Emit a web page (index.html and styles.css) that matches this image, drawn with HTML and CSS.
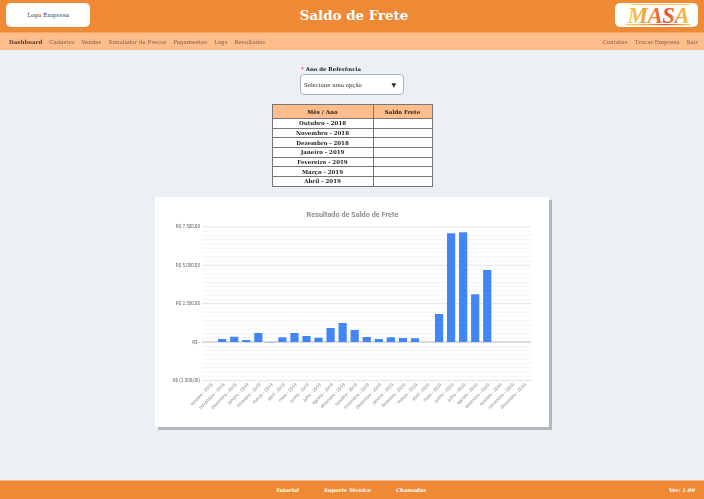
FILE: index.html
```html
<!DOCTYPE html>
<html lang="pt-BR">
<head>
    <meta charset="UTF-8">
    <meta name="viewport" content="width=device-width, initial-scale=1.0">
    <title>Saldo de Frete</title>
    <link rel="stylesheet" href="styles.css">
</head>
<body>
    <div class="page">
        <header class="top-bar">
            <div class="logo-box">Logo Empresa</div>
            <h1 class="page-title">Saldo de Frete</h1>
            <div class="logo-box logo-masa">
                <svg class="masa-svg" width="80" height="22" viewBox="-3 0 80 22">
                    <defs>
                        <linearGradient id="masaFill" x1="0" y1="0" x2="1" y2="0">
                            <stop offset="0" stop-color="#f7d24f"/>
                            <stop offset="0.35" stop-color="#ee9a3c"/>
                            <stop offset="0.62" stop-color="#dd4a2c"/>
                            <stop offset="1" stop-color="#f6d64e"/>
                        </linearGradient>
                    </defs>
                    <rect x="10.5" y="0" width="60" height="1" fill="#f3d65c"/>
                    <rect x="5.5" y="20" width="65" height="1.2" fill="url(#masaFill)"/>
                    <text class="masa-text" x="38.5" y="18.7" text-anchor="middle" fill="url(#masaFill)">MASA</text>
                </svg>
            </div>
        </header>

        <nav class="nav-bar">
            <div class="nav-group">
                <a class="nav-link active">Dashboard</a>
                <a class="nav-link">Cadastro</a>
                <a class="nav-link">Vendas</a>
                <a class="nav-link">Simulador de Preços</a>
                <a class="nav-link">Pagamentos</a>
                <a class="nav-link">Logs</a>
                <a class="nav-link">Resultados</a>
            </div>
            <div class="nav-group">
                <a class="nav-link">Contatos</a>
                <a class="nav-link">Trocar Empresa</a>
                <a class="nav-link">Sair</a>
            </div>
        </nav>

        <main class="content">
            <div class="field">
                <label class="field-label"><span class="required">*</span> Ano de Referência</label>
                <div class="select-box">
                    <span>Selecione uma opção</span>
                    <span class="select-arrow">▼</span>
                </div>
            </div>

            <table class="freight-table">
                <thead>
                    <tr><th class="col-month">Mês / Ano</th><th>Saldo Frete</th></tr>
                </thead>
                <tbody>
                    <tr><td>Outubro - 2018</td><td></td></tr>
                    <tr><td>Novembro - 2018</td><td></td></tr>
                    <tr><td>Dezembro - 2018</td><td></td></tr>
                    <tr><td>Janeiro - 2019</td><td></td></tr>
                    <tr><td>Fevereiro - 2019</td><td></td></tr>
                    <tr><td>Março - 2019</td><td></td></tr>
                    <tr><td>Abril - 2019</td><td></td></tr>
                </tbody>
            </table>

            <section class="chart-card">
                <svg id="chart" class="chart" width="394" height="230" viewBox="155 197 394 230"></svg>
            </section>
        </main>

        <footer class="bottom-bar">
            <div class="footer-links">
                <a>Tutorial</a>
                <a>Suporte Técnico</a>
                <a>Chamados</a>
            </div>
            <span>Ver: 1.00</span>
        </footer>
    </div>

    <script src="chart.js"></script>
</body>
</html>
```
FILE: styles.css
```css
* {
    margin: 0;
    padding: 0;
    box-sizing: border-box;
}

body {
    font-family: 'DejaVu Serif', 'Liberation Serif', serif;
    background-color: #ebf0f5;
    color: #222;
    overflow: hidden;
}

/* the reference is a scaled down capture, so everything is a bit soft */
.page {
    width: 100vw;
    height: 100vh;
    display: flex;
    flex-direction: column;
    filter: blur(0.3px);
}

.top-bar {
    height: 32px;
    flex: none;
    background: #ee8936;
    display: flex;
    justify-content: space-between;
    align-items: center;
    padding: 0 6px 2px;
}

.logo-box {
    width: 84px;
    height: 24px;
    background: #fff;
    border-radius: 5px;
    display: flex;
    justify-content: center;
    align-items: center;
    font-size: 5.7px;
    color: #333;
}

.logo-masa {
    width: 83px;
}

.masa-svg {
    overflow: visible;
}

.masa-text {
    font-family: 'Liberation Serif', serif;
    font-size: 23px;
    font-weight: 700;
    font-style: italic;
    letter-spacing: -0.5px;
}

.page-title {
    font-size: 13.4px;
    font-weight: 700;
    color: #fff;
    padding-left: 3px;
}

.nav-bar {
    height: 18px;
    flex: none;
    background: #ffbd8b;
    border-top: 1px solid #f5a566;
    display: flex;
    justify-content: space-between;
    align-items: center;
    padding: 0 6px 0 9px;
}

.nav-group {
    display: flex;
    gap: 7px;
}

.nav-link {
    font-size: 5.5px;
    color: #7a5a48;
}

.nav-link.active {
    font-weight: 700;
    color: #5a3d2e;
}

.content {
    flex: 1;
    display: flex;
    flex-direction: column;
    align-items: center;
    padding-top: 15px;
}

.field {
    width: 104px;
    margin-bottom: 9px;
}

.field-label {
    display: block;
    font-size: 5.4px;
    font-weight: 700;
    margin: 0 0 1px 1px;
    line-height: 8px;
}

.required {
    color: #e0302a;
}

.select-box {
    height: 21px;
    background: #fff;
    border: 1px solid #a9b3c4;
    border-radius: 4px;
    display: flex;
    justify-content: space-between;
    align-items: center;
    padding: 0 4px 0 3px;
    font-size: 5.4px;
}

.select-arrow {
    font-size: 6px;
    padding-right: 3px;
}

.freight-table {
    width: 161px;
    border-collapse: collapse;
    font-size: 5.5px;
    table-layout: fixed;
    margin-bottom: 10px;
}

.freight-table th,
.freight-table td {
    border: 1px solid #777;
    text-align: center;
    font-weight: 700;
    height: 9.7px;
    line-height: 8px;
    background: #fff;
}

.freight-table th {
    height: 14px;
    background: #ffbd8b;
}

.col-month {
    width: 101px;
}

.chart-card {
    width: 394px;
    height: 230px;
    flex: none;
}

.chart {
    display: block;
    background: #fff;
    box-shadow: 3px 3px 0 #b4b8bd;
    font-family: 'Roboto', 'Liberation Sans', sans-serif;
}

.chart-title {
    font-size: 7.3px;
    font-weight: 700;
    fill: #8f8f8f;
}

.axis-label {
    font-size: 4.6px;
    fill: #666;
}

.month-label {
    font-size: 4.6px;
    fill: #888;
}

.bottom-bar {
    height: 19px;
    flex: none;
    background: #ee8936;
    border-top: 1px solid #f3b88a;
    display: flex;
    justify-content: space-between;
    align-items: center;
    padding: 0 9px 0 276px;
    font-size: 5.2px;
    font-style: italic;
    font-weight: 700;
    color: #fff;
}

.footer-links {
    display: flex;
    gap: 25px;
}
```
FILE: chart.js
```js
// Chart of monthly balance, drawn into the svg
const svgNS = "http://www.w3.org/2000/svg";
const chart = document.getElementById("chart");

const plotLeft = 202;
const plotRight = 531;
const zeroY = 342;
const stepY = 38.4; // pixels per R$ 2.500,00

const months = ["janeiro", "fevereiro", "março", "abril", "maio", "junho", "julho",
    "agosto", "setembro", "outubro", "novembro", "dezembro"];

// bar tops in pixels above the zero line, from outubro 2018 to dezembro 2020
const bars = [0, 3, 5.3, 2, 9, -1, 4.7, 9, 6, 4.3, 14, 19, 12, 5, 3, 4.7, 4, 3.7, 0, 28, 108.7, 109.7, 47.7, 72, 0, 0, 0];

function add(tag, attrs, text) {
    const el = document.createElementNS(svgNS, tag);
    for (const key in attrs) {
        el.setAttribute(key, attrs[key]);
    }
    if (text) el.textContent = text;
    chart.appendChild(el);
    return el;
}

add("text", { class: "chart-title", x: 352.5, y: 216.5, "text-anchor": "middle" }, "Resultado de Saldo de Frete");

// grid lines
for (let i = -9; i <= 27; i++) {
    const y = zeroY - (i * stepY) / 9;
    const major = i % 9 === 0;
    add("line", {
        x1: plotLeft, x2: plotRight, y1: y, y2: y,
        stroke: i === 0 ? "#b5b5b5" : major ? "#e4e4e4" : "#f3f3f3",
        "stroke-width": 1
    });
}

const yLabels = ["R$ 7.500,00", "R$ 5.000,00", "R$ 2.500,00", "R$ -", "R$ (2.500,00)"];
yLabels.forEach((label, i) => {
    add("text", { class: "axis-label", x: 200, y: zeroY - (3 - i) * stepY + 1.6, "text-anchor": "end" }, label);
});

// bars and month labels
bars.forEach((h, i) => {
    const x = 206 + i * 12.05;
    if (h > 0) {
        add("rect", { x: x, y: zeroY - h, width: 8.2, height: h, fill: "#4285f4" });
    } else if (h < 0) {
        add("rect", { x: x, y: zeroY, width: 8.2, height: -h, fill: "#a9c7f8" });
    }

    const idx = (i + 9) % 12;
    const year = 2018 + Math.floor((i + 9) / 12);
    const lx = x + 7;
    const ly = 385;
    add("text", {
        class: "month-label", x: lx, y: ly, "text-anchor": "end",
        transform: "rotate(-45 " + lx + " " + ly + ")"
    }, months[idx] + " - " + year);
});
```
